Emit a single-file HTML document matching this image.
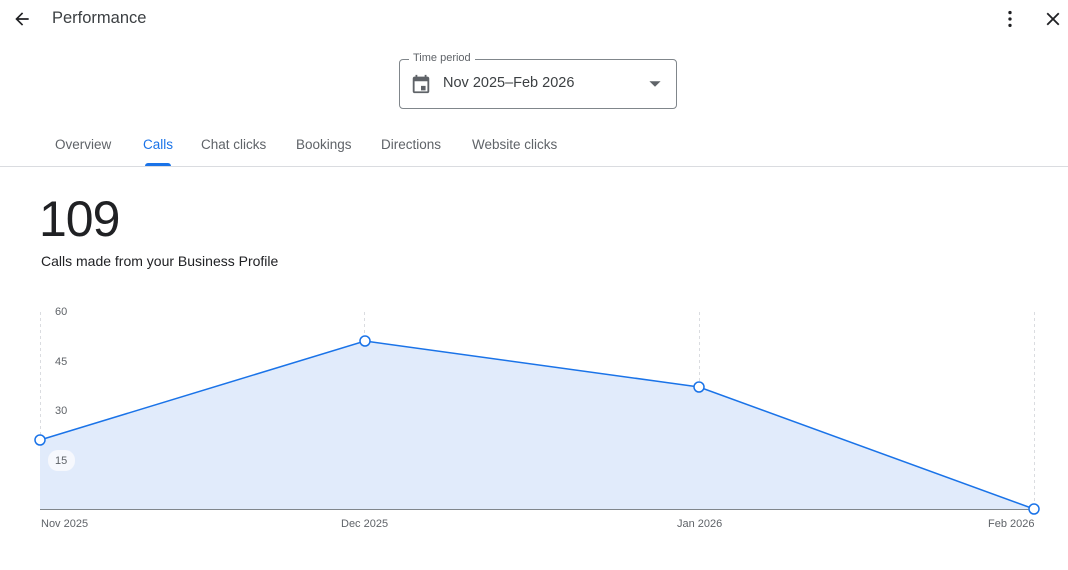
<!DOCTYPE html>
<html><head><meta charset="utf-8"><style>
*{margin:0;padding:0;box-sizing:border-box}
body{width:1068px;height:570px;background:#fff;font-family:"Liberation Sans",sans-serif;position:relative;overflow:hidden;color:#202124}
.a{position:absolute}
.tab{position:absolute;top:137px;font-size:13.5px;color:#5f6368}
</style></head><body>
<svg class="a" style="left:12px;top:9px" width="20" height="20" viewBox="0 0 24 24"><path d="M20 11H7.83l5.59-5.59L12 4l-8 8 8 8 1.41-1.41L7.83 13H20v-2z" fill="#202124"/></svg>
<div class="a" style="left:52px;top:9px;font-size:16.5px;color:#3c4043">Performance</div>
<svg class="a" style="left:998px;top:8px" width="24" height="22" viewBox="0 0 24 24"><circle cx="12" cy="5" r="1.8" fill="#202124"/><circle cx="12" cy="12" r="1.8" fill="#202124"/><circle cx="12" cy="19" r="1.8" fill="#202124"/></svg>
<svg class="a" style="left:1042px;top:8px" width="22" height="22" viewBox="0 0 24 24"><path d="M19 6.41L17.59 5 12 10.59 6.41 5 5 6.41 10.59 12 5 17.590 6.41 19 12 13.41 17.59 19 19 17.59 13.41 12z" fill="#202124"/></svg>
<div class="a" style="left:399px;top:59px;width:278px;height:50px;border:1px solid #80868b;border-radius:4px"></div>
<div class="a" style="left:409px;top:52px;background:#fff;padding:0 4px;font-size:11px;color:#5f6368">Time period</div>
<svg class="a" style="left:410px;top:73px" width="22" height="22" viewBox="0 0 24 24"><path d="M19 4h-1V2h-2v2H8V2H6v2H5c-1.1 0-2 .9-2 2v14c0 1.1.9 2 2 2h14c1.1 0 2-.9 2-2V6c0-1.1-.9-2-2-2zm0 16H5V9h14v11zM12 14h5v5h-5z" fill="#5f6368"/></svg>
<div class="a" style="left:443px;top:75px;font-size:14.5px;color:#3c4043">Nov 2025–Feb 2026</div>
<svg class="a" style="left:647px;top:77px" width="16" height="14" viewBox="0 0 10 10"><path d="M1 3l4 4 4-4z" fill="#5f6368"/></svg>
<div class="tab" style="left:55px">Overview</div>
<div class="tab" style="left:143px;color:#1a73e8">Calls</div>
<div class="tab" style="left:201px">Chat clicks</div>
<div class="tab" style="left:296px">Bookings</div>
<div class="tab" style="left:381px">Directions</div>
<div class="tab" style="left:472px">Website clicks</div>
<div class="a" style="left:145px;top:163px;width:26px;height:3px;background:#1a73e8;border-radius:3px 3px 0 0"></div>
<div class="a" style="left:0;top:166px;width:1068px;height:1px;background:#dadce0"></div>
<div class="a" style="left:39px;top:190px;font-size:50px;color:#202124;letter-spacing:-1px">109</div>
<div class="a" style="left:41px;top:253px;font-size:14px;color:#202124">Calls made from your Business Profile</div>
<svg class="a" style="left:0;top:290px" width="1068" height="250">
<g stroke="#dadce0" stroke-dasharray="3,3"><line x1="40.5" y1="22" x2="40.5" y2="219"/><line x1="364.5" y1="22" x2="364.5" y2="219"/><line x1="699.5" y1="22" x2="699.5" y2="219"/><line x1="1034.5" y1="22" x2="1034.5" y2="219"/></g>
<polygon points="40,150 365,51 699,97 1034,219 1034,219 40,219" fill="#e1ebfb"/>
<line x1="40" y1="219.5" x2="1034" y2="219.5" stroke="#80868b"/>
<polyline points="40,150 365,51 699,97 1034,219" fill="none" stroke="#1a73e8" stroke-width="1.5"/>
<g fill="#fff" stroke="#1a73e8" stroke-width="1.5"><circle cx="40" cy="150" r="5"/><circle cx="365" cy="51" r="5"/><circle cx="699" cy="97" r="5"/><circle cx="1034" cy="219" r="5"/></g>
<rect x="48" y="160" width="27" height="21" rx="10" fill="#f6f8fd"/>
<g font-size="11" fill="#5f6368" font-family="Liberation Sans,sans-serif"><text x="55" y="25">60</text><text x="55" y="75">45</text><text x="55" y="124">30</text><text x="55" y="174">15</text>
<text x="41" y="237">Nov 2025</text><text x="341" y="237">Dec 2025</text><text x="677" y="237">Jan 2026</text><text x="988" y="237">Feb 2026</text></g>
</svg>
</body></html>
